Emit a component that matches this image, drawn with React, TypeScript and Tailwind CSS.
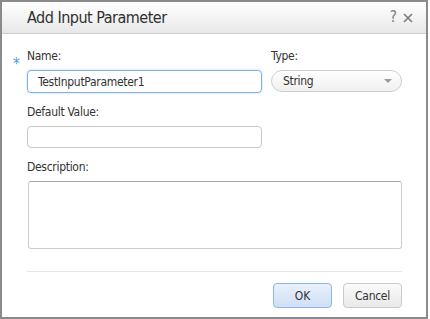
import React from 'react';

const font = { fontFamily: '"Liberation Sans Narrow", "DejaVu Sans Condensed", Roboto, sans-serif' };

function Label({ children }: { children: React.ReactNode }) {
  return <label className="block h-4 text-[12px] leading-4 tracking-[-0.3px] text-[#333]">{children}</label>;
}

export default function App() {
  return (
    <div className="w-[430px] h-[319px] bg-white" style={font}>
      <div className="w-[428px] h-[319px] border-2 border-[#8a8a8a] flex flex-col">
        <div className="h-[32px] flex items-center justify-between border-b border-[#cfcfcf] bg-gradient-to-b from-white to-[#e8e8e8] pl-[25px] pr-[12px]">
          <h1 className="text-[16px] tracking-[-0.5px] text-[#2f2f2f] leading-none">Add Input Parameter</h1>
          <div className="flex items-center gap-[5px] text-[#7a7a7a]">
            <span className="text-[15px] leading-none">?</span>
            <svg width="12" height="12" viewBox="0 0 12 12">
              <path d="M2 2 L10 10 M10 2 L2 10" stroke="#7a7a7a" strokeWidth="1.6" />
            </svg>
          </div>
        </div>

        <div className="flex-1 flex flex-col pl-[25px] pr-[24px] pt-[14px]">
          <div className="grid grid-cols-[235px_131px] gap-x-[9px] relative">
            <span className="absolute left-[-14px] top-[9px] text-[15px] text-[#4d9be0] leading-none">*</span>
            <div>
              <Label>Name:</Label>
              <div className="mt-[6px] h-[23px] rounded-[4px] border border-[#7fb0e6] shadow-[0_0_2px_#a9cbf1] flex items-center pl-[10px] text-[12px] tracking-[-0.3px] text-[#333]">
                TestInputParameter1
              </div>
            </div>
            <div>
              <Label>Type:</Label>
              <div className="mt-[6px] h-[22px] rounded-full border border-[#cfcfcf] bg-gradient-to-b from-white to-[#f0f0f0] flex items-center justify-between pl-[11px] pr-[9px] text-[12px] tracking-[-0.3px] text-[#333]">
                <span>String</span>
                <svg width="8" height="5" viewBox="0 0 8 5">
                  <path d="M0 0 H8 L4 4 Z" fill="#9a9a9a" />
                </svg>
              </div>
            </div>
          </div>

          <div className="mt-[11px] w-[235px]">
            <Label>Default Value:</Label>
            <div className="mt-[6px] h-[22px] rounded-[4px] border border-[#c9c9c9]" />
          </div>

          <div className="mt-[11px]">
            <Label>Description:</Label>
            <div className="mt-[6px] ml-[1px] h-[68px] rounded-[3px] border border-[#cdcdcd] border-t-[#a9a9a9]" />
          </div>

          <div className="mt-[22px] h-px bg-[#e6e6e6]" />

          <div className="mt-[11px] flex justify-end gap-[11px]">
            <button className="w-[59px] h-[25px] rounded-[4px] border border-[#8db6e8] bg-gradient-to-b from-[#eaf1fb] to-[#cfdff5] text-[12px] text-[#333]">
              OK
            </button>
            <button className="w-[59px] h-[25px] rounded-[4px] border border-[#cacaca] bg-gradient-to-b from-[#fbfbfb] to-[#e9e9e9] text-[12px] tracking-[-0.3px] text-[#333]">
              Cancel
            </button>
          </div>
        </div>
      </div>
    </div>
  );
}
